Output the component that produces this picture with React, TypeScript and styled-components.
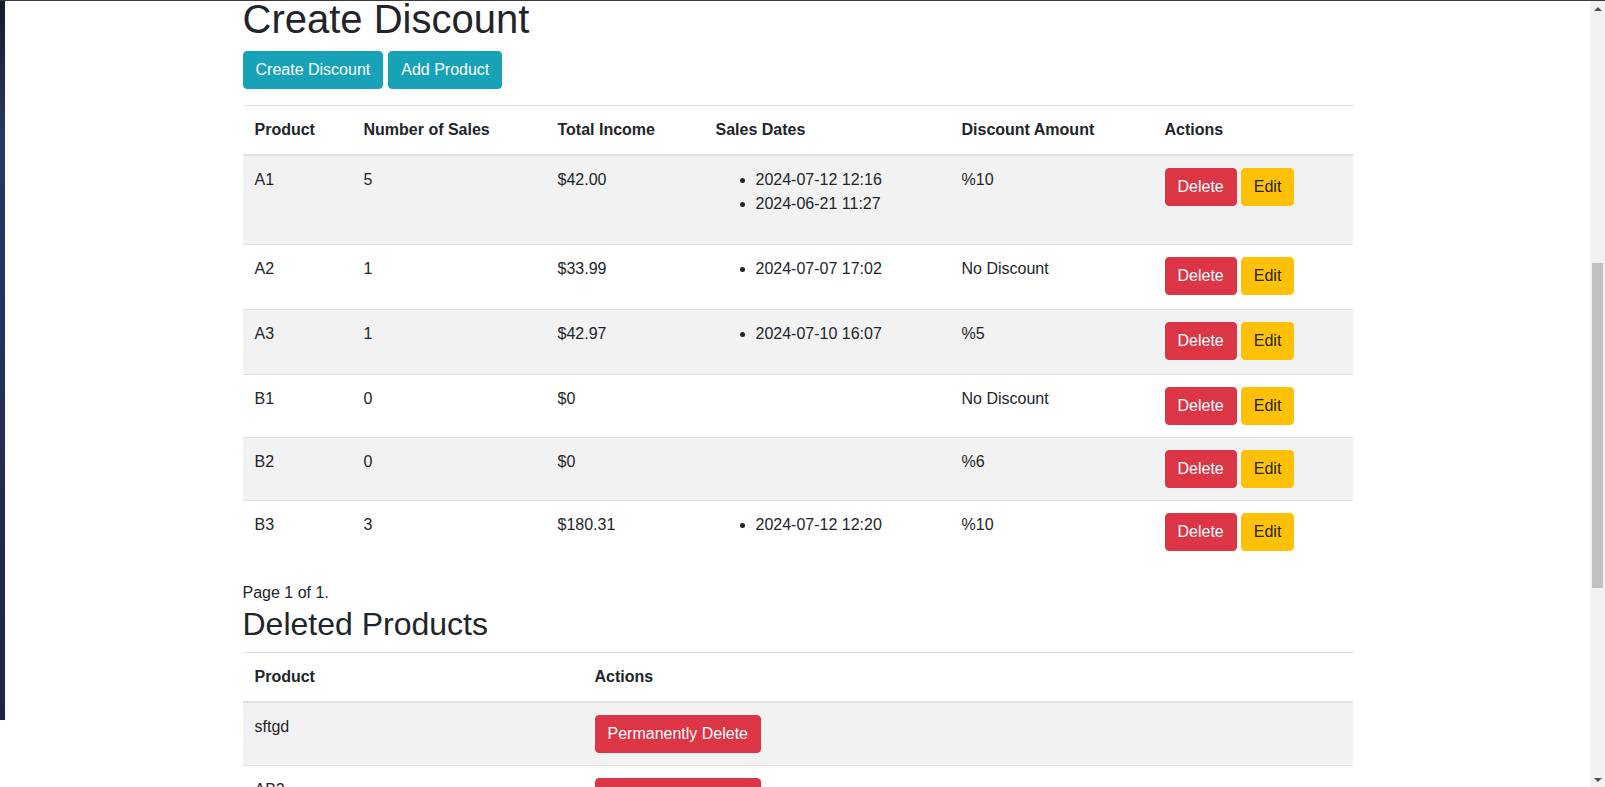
import React from "react";
import styled, { createGlobalStyle } from "styled-components";

interface ProductRow {
	name: string;
	sales: number;
	income: string;
	dates: string[];
	discount: string;
}

const products: ProductRow[] = [
	{ name: "A1", sales: 5, income: "$42.00", dates: ["2024-07-12 12:16", "2024-06-21 11:27"], discount: "%10" },
	{ name: "A2", sales: 1, income: "$33.99", dates: ["2024-07-07 17:02"], discount: "No Discount" },
	{ name: "A3", sales: 1, income: "$42.97", dates: ["2024-07-10 16:07"], discount: "%5" },
	{ name: "B1", sales: 0, income: "$0", dates: [], discount: "No Discount" },
	{ name: "B2", sales: 0, income: "$0", dates: [], discount: "%6" },
	{ name: "B3", sales: 3, income: "$180.31", dates: ["2024-07-12 12:20"], discount: "%10" },
];

const deletedProducts = ["sftgd", "AB2"];

const GlobalStyle = createGlobalStyle`
	html, body {
		margin: 0;
		padding: 0;
		overflow: hidden;
		background: #fff;
	}
	body {
		font-family: "Liberation Sans", Arial, sans-serif;
		font-size: 16px;
		line-height: 1.5;
		color: #212529;
	}
	* {
		box-sizing: border-box;
	}
`;

const Frame = styled.div`
	height: 787px;
	display: flex;
	flex-direction: column;
	overflow: hidden;
`;

const TopEdge = styled.div`
	height: 1px;
	flex-shrink: 0;
	background: #3a3a3a;
`;

const Workspace = styled.div`
	flex: 1;
	display: flex;
	min-height: 0;
`;

const SideStrip = styled.div`
	width: 5px;
	height: 719px;
	flex-shrink: 0;
	background: linear-gradient(180deg, #161b2b 0%, #2a3760 18%, #26335c 45%, #1f2a4c 75%, #1c2644 100%);
`;

const Main = styled.main`
	flex: 1;
	min-width: 0;
	overflow: hidden;
`;

const Container = styled.div`
	max-width: 1140px;
	margin: 0 auto;
	padding: 0 15px;
`;

const Title = styled.h1`
	font-size: 40px;
	font-weight: 500;
	line-height: 1.2;
	margin: -6px 0 8px;
`;

const SubTitle = styled.h2`
	font-size: 32px;
	font-weight: 500;
	line-height: 1.2;
	margin: 0 0 9px;
`;

const ButtonRow = styled.div`
	display: flex;
	gap: 5px;
	margin-bottom: 16px;
`;

const Button = styled.button<{ $variant: "info" | "danger" | "warning" }>`
	font-family: inherit;
	font-size: 16px;
	line-height: 1.5;
	padding: 6px 12px;
	border: 1px solid transparent;
	border-radius: 4px;
	cursor: pointer;
	white-space: nowrap;
	background: ${(p) => (p.$variant === "info" ? "#17a2b8" : p.$variant === "danger" ? "#dc3545" : "#ffc107")};
	border-color: ${(p) => (p.$variant === "info" ? "#17a2b8" : p.$variant === "danger" ? "#dc3545" : "#ffc107")};
	color: ${(p) => (p.$variant === "warning" ? "#212529" : "#fff")};
`;

const ActionGroup = styled.div`
	display: flex;
	gap: 4px;
`;

const Table = styled.table`
	width: 100%;
	table-layout: fixed;
	border-collapse: collapse;
	margin-bottom: 16px;
	color: #212529;
`;

const Th = styled.th<{ $w?: number }>`
	width: ${(p) => (p.$w ? `${p.$w}px` : "auto")};
	text-align: left;
	font-weight: 700;
	vertical-align: bottom;
	padding: 12px;
	border-top: 1px solid #dee2e6;
	border-bottom: 2px solid #dee2e6;
`;

const Tr = styled.tr<{ $striped: boolean }>`
	background: ${(p) => (p.$striped ? "#f2f2f2" : "transparent")};
`;

const Td = styled.td`
	padding: 12px;
	vertical-align: top;
	border-top: 1px solid #dee2e6;
`;

const DateList = styled.ul`
	margin: 0 0 16px;
	padding-left: 40px;
`;

const PageInfo = styled.div`
	line-height: 24px;
`;

const Scrollbar = styled.div`
	width: 15px;
	flex-shrink: 0;
	display: flex;
	flex-direction: column;
	background: #f1f1f1;
`;

const ArrowBox = styled.div<{ $down?: boolean }>`
	height: 15px;
	display: flex;
	align-items: center;
	justify-content: center;

	&::after {
		content: "";
		width: 0;
		height: 0;
		border-left: 4px solid transparent;
		border-right: 4px solid transparent;
		${(p) => (p.$down ? "border-top: 4px solid #505050;" : "border-bottom: 4px solid #505050;")}
	}
`;

const Track = styled.div`
	flex: 1;
	display: flex;
	flex-direction: column;
	align-items: center;
`;

const Thumb = styled.div`
	width: 11px;
	background: #c1c1c1;
`;

const App = () => {
	return (
		<>
			<GlobalStyle />
			<Frame>
				<TopEdge />
				<Workspace>
					<SideStrip />
					<Main>
						<Container>
							<Title>Create Discount</Title>
							<ButtonRow>
								<Button $variant="info">Create Discount</Button>
								<Button $variant="info">Add Product</Button>
							</ButtonRow>
							<Table>
								<thead>
									<tr>
										<Th $w={109}>Product</Th>
										<Th $w={194}>Number of Sales</Th>
										<Th $w={158}>Total Income</Th>
										<Th $w={246}>Sales Dates</Th>
										<Th $w={203}>Discount Amount</Th>
										<Th>Actions</Th>
									</tr>
								</thead>
								<tbody>
									{products.map((item, i) => (
										<Tr key={item.name} $striped={i % 2 === 0}>
											<Td>{item.name}</Td>
											<Td>{item.sales}</Td>
											<Td>{item.income}</Td>
											<Td>
												{item.dates.length > 0 && (
													<DateList>
														{item.dates.map((d) => (
															<li key={d}>{d}</li>
														))}
													</DateList>
												)}
											</Td>
											<Td>{item.discount}</Td>
											<Td>
												<ActionGroup>
													<Button $variant="danger">Delete</Button>
													<Button $variant="warning">Edit</Button>
												</ActionGroup>
											</Td>
										</Tr>
									))}
								</tbody>
							</Table>
							<PageInfo>Page 1 of 1.</PageInfo>
							<SubTitle>Deleted Products</SubTitle>
							<Table>
								<thead>
									<tr>
										<Th $w={340}>Product</Th>
										<Th>Actions</Th>
									</tr>
								</thead>
								<tbody>
									{deletedProducts.map((name, i) => (
										<Tr key={name} $striped={i % 2 === 0}>
											<Td>{name}</Td>
											<Td>
												<Button $variant="danger">Permanently Delete</Button>
											</Td>
										</Tr>
									))}
								</tbody>
							</Table>
						</Container>
					</Main>
					<Scrollbar>
						<ArrowBox />
						<Track>
							<Thumb style={{ marginTop: 247, height: 325 }} />
						</Track>
						<ArrowBox $down />
					</Scrollbar>
				</Workspace>
			</Frame>
		</>
	);
};

export default App;
